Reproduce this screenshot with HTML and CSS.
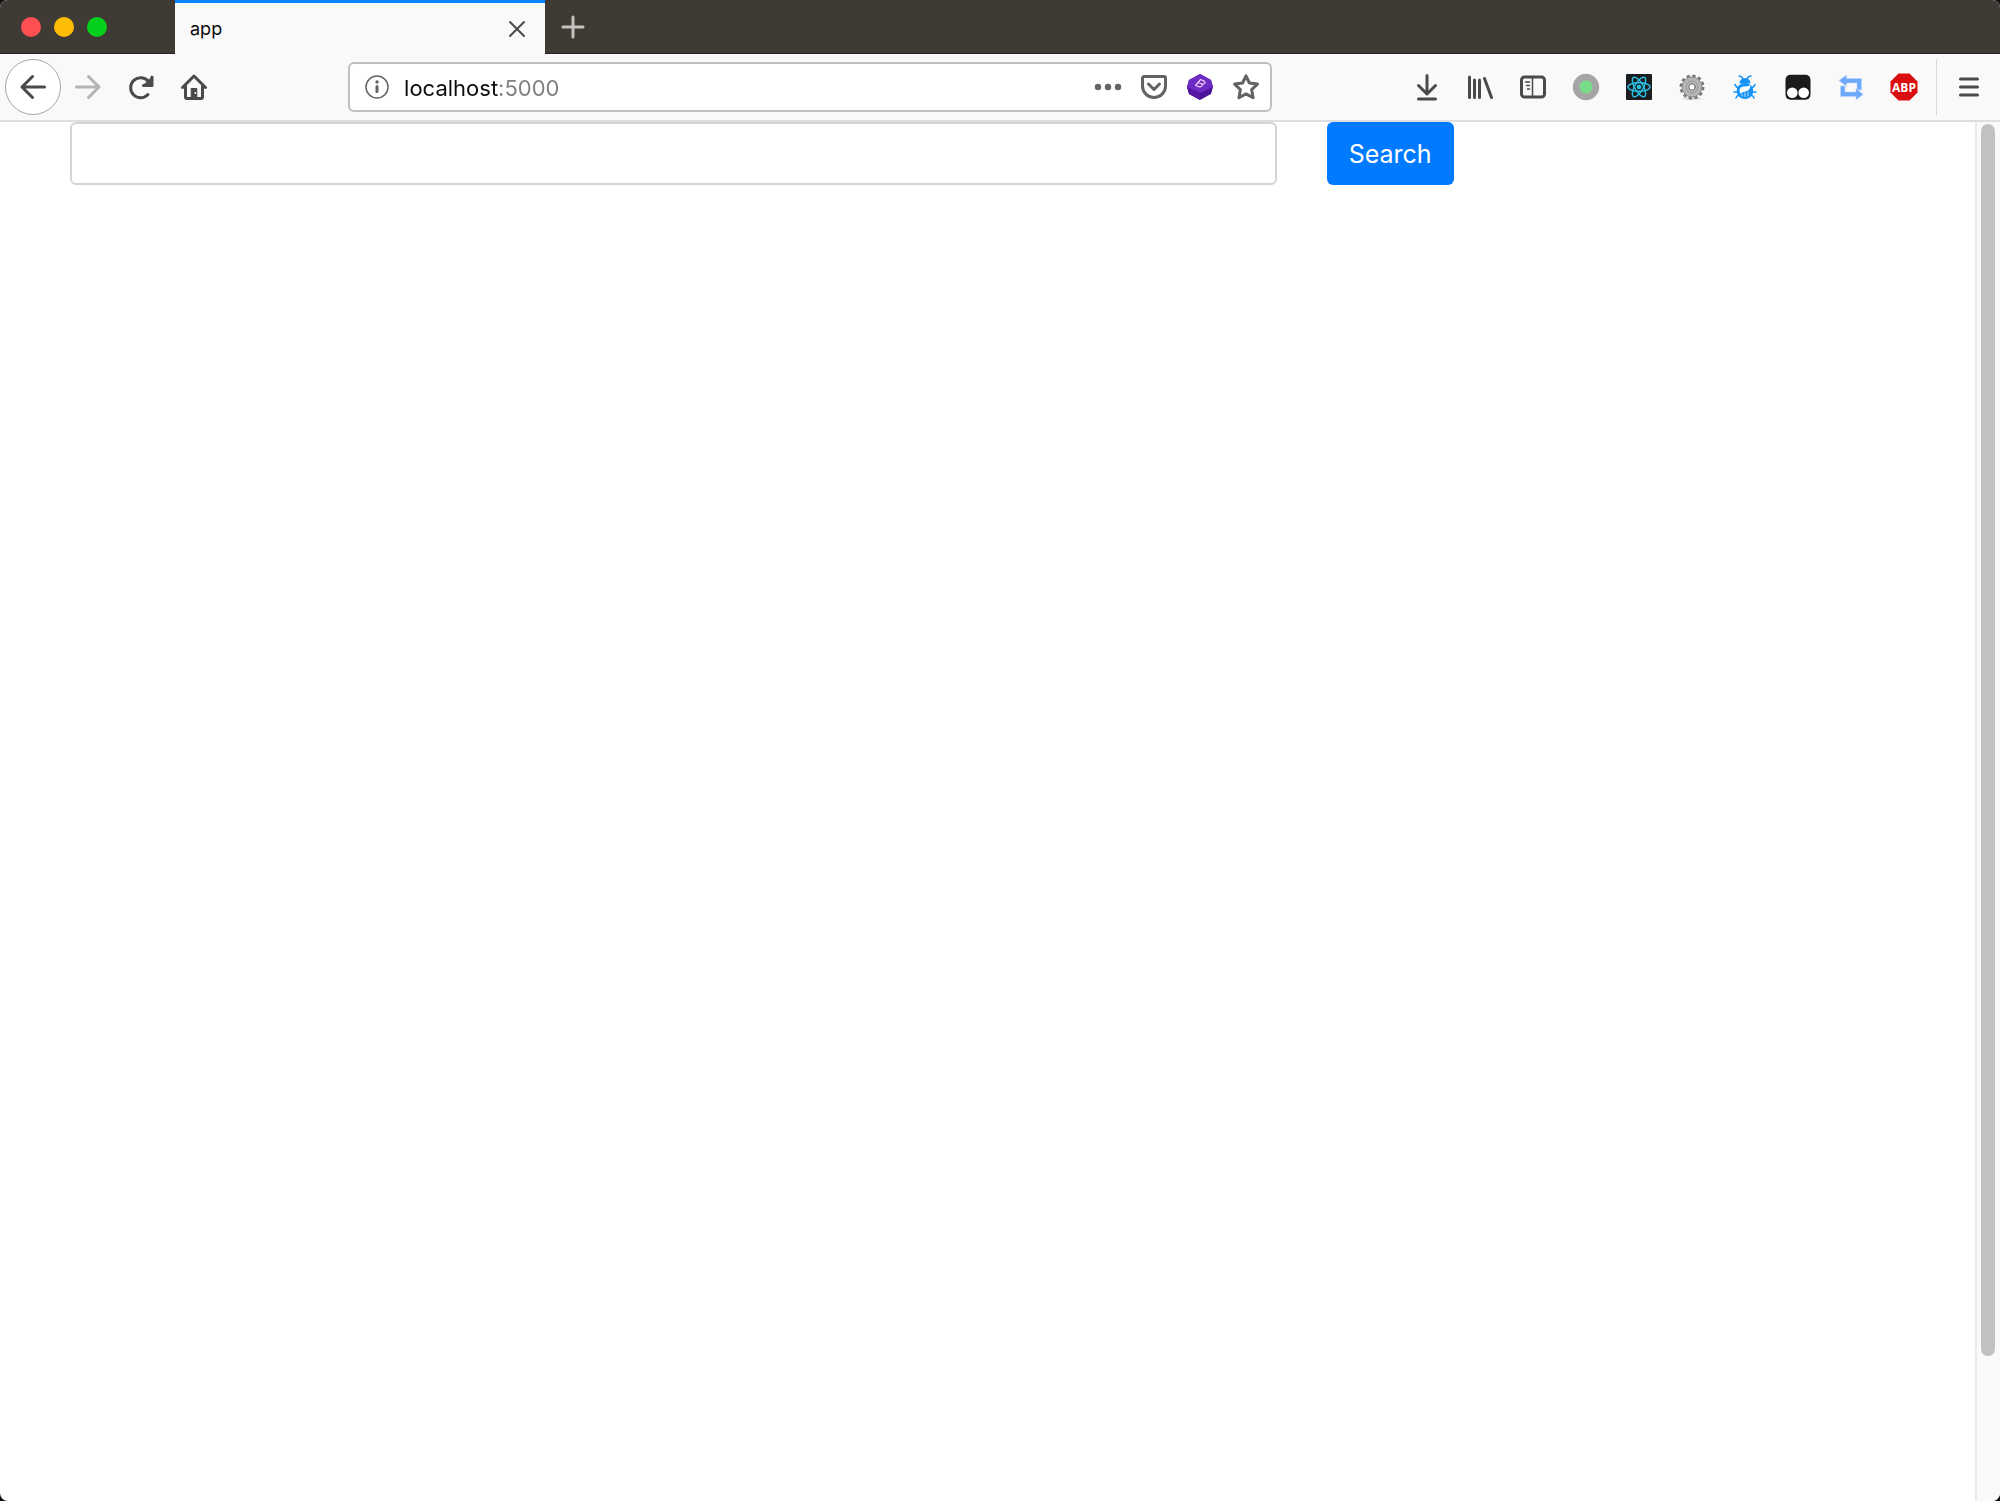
FILE: index.html
```html
<!DOCTYPE html>
<html lang="en">
<head>
  <meta charset="UTF-8">
  <meta name="viewport" content="width=device-width, initial-scale=1.0">
  <title>app</title>
  <link rel="stylesheet" href="styles.css">
</head>
<body>
  <div class="window">

    <header class="titlebar">
      <div class="lights">
        <button type="button" class="light red" aria-label="Close window"></button>
        <button type="button" class="light yellow" aria-label="Minimize window"></button>
        <button type="button" class="light green" aria-label="Zoom window"></button>
      </div>
      <div class="tab">
        <span>app</span>
        <button type="button" class="tab-close" aria-label="Close tab">
          <svg width="18" height="18" viewBox="0 0 18 18"><path d="M2 2l14 14M16 2L2 16"/></svg>
        </button>
      </div>
      <button type="button" class="new-tab" aria-label="New tab">
        <svg width="24" height="24" viewBox="0 0 24 24"><path d="M12 2v20M2 12h20"/></svg>
      </button>
    </header>

    <nav class="toolbar">
      <div class="nav-buttons">
        <button type="button" class="tool back" aria-label="Back">
          <svg class="icon" viewBox="0 0 26 26"><path d="M24.5 13H2M12.5 2.5L2 13l10.5 10.5"/></svg>
        </button>
        <button type="button" class="tool forward" aria-label="Forward" disabled>
          <svg class="icon" viewBox="0 0 26 26"><path d="M1.5 13H24M13.5 2.5L24 13 13.5 23.5"/></svg>
        </button>
        <button type="button" class="tool" aria-label="Reload">
          <svg class="icon" viewBox="0 0 26 26"><path d="M20 20.5A10 10 0 1 1 20.5 7.5"/><path d="M24 3v8.5h-8.5z" class="solid"/><path d="M24 3v8.5h-8.5"/></svg>
        </button>
        <button type="button" class="tool" aria-label="Home">
          <svg class="icon" viewBox="0 0 26 26"><path d="M1.5 13.5L13 2l11.5 11.5M4.5 12v11a1.5 1.5 0 0 0 1.5 1.5h14a1.5 1.5 0 0 0 1.5-1.5V12"/><path d="M10.2 24v-9.5h5.6V24z" class="solid"/><circle cx="14.3" cy="19" r="1" fill="#f9f9fa" stroke="none"/></svg>
        </button>
      </div>

      <div class="spacer"></div>

      <div class="urlbar">
        <button type="button" class="url-button" aria-label="Site information">
          <svg class="icon" viewBox="0 0 26 26"><circle cx="13" cy="13" r="11" stroke-width="1.5"/><path d="M13 12.5v5"/><circle cx="13" cy="8" r="1.7" class="dot"/></svg>
        </button>
        <input type="text" class="url" aria-label="Address" value="localhost:5000">
        <button type="button" class="url-button" aria-label="Page actions">
          <svg class="icon" viewBox="0 0 26 26"><circle cx="3" cy="13" r="3.2" class="dot"/><circle cx="13" cy="13" r="3.2" class="dot"/><circle cx="23" cy="13" r="3.2" class="dot"/></svg>
        </button>
        <button type="button" class="url-button" aria-label="Save to Pocket">
          <svg class="icon" viewBox="0 0 26 26"><path d="M3 2.5h20a1.5 1.5 0 0 1 1.5 1.5v8a11.5 11.5 0 0 1-23 0V4A1.5 1.5 0 0 1 3 2.5zM7.5 10l5.5 5.5 5.5-5.5"/></svg>
        </button>
        <button type="button" class="url-button" aria-label="Bootstrap">
          <svg class="icon" viewBox="0 0 26 26">
            <g stroke="none">
              <path d="M13 0l11 6 2 7-2 7-11 6-11-6-2-7 2-7z" fill="#4a1199"/>
              <path d="M13 0l11 6 2 7-13 6L0 13l2-7z" fill="#6b2bc4"/>
              <path d="M0 13l13 6v7L2 20z" fill="#56169f"/>
            </g>
            <path d="M8.5 11.5L13.5 5.5l3.6 1.6q1.6 1 .3 2.4-1.2 1.100-3 .2 1.600 1 .4 2.300-1.500 1.200-3 .6zM11 8.500l3.400 1.200" stroke="#f5c9f3" stroke-width="1.200"/>
          </svg>
        </button>
        <button type="button" class="url-button" aria-label="Bookmark this page">
          <svg class="icon" viewBox="0 0 26 26"><path d="M13 1.800l3.400 7.200 8 1.100-5.800 5.500 1.500 8.200-7.100-3.900-7.100 3.900 1.500-8.200L1.600 10.100l8-1.100z"/></svg>
        </button>
      </div>

      <div class="spacer"></div>

      <div class="extensions">
        <button type="button" class="tool" aria-label="Downloads">
          <svg class="icon" viewBox="0 0 26 26"><path d="M13 1.5V19M4.5 11.5L13 20l8.500-8.500M4.500 25h17"/></svg>
        </button>
        <button type="button" class="tool" aria-label="Library">
          <svg class="icon" viewBox="0 0 26 26"><path d="M2.500 3v20.500M7.500 6v17.500M12.500 6v17.500M17.500 4.500l7 19"/></svg>
        </button>
        <button type="button" class="tool" aria-label="Sidebars">
          <svg class="icon" viewBox="0 0 26 26"><rect x="1.5" y="3" width="23" height="20" rx="3"/><path d="M12.5 3v20" stroke-width="1.5"/><path d="M5.5 8h4M6.5 11.5h3M7.5 15h2" stroke-width="1.5"/></svg>
        </button>
        <button type="button" class="tool" aria-label="Status">
          <svg class="icon" viewBox="0 0 26 26"><circle cx="13" cy="13" r="13.2" fill="#a5a5a5" stroke="none"/><circle cx="13" cy="13" r="6.5" fill="#79dc89" stroke="none"/></svg>
        </button>
        <button type="button" class="tool" aria-label="React Developer Tools">
          <svg class="icon" viewBox="0 0 26 26">
            <rect width="26" height="26" rx="1" fill="#1b1d20" stroke="none"/>
            <g stroke="#2cc3e8" stroke-width="1.4">
              <ellipse cx="13" cy="13" rx="11" ry="4.3"/>
              <ellipse cx="13" cy="13" rx="11" ry="4.3" transform="rotate(60 13 13)"/>
              <ellipse cx="13" cy="13" rx="11" ry="4.3" transform="rotate(120 13 13)"/>
            </g>
            <circle cx="13" cy="13" r="2.3" fill="#2cc3e8" stroke="none"/>
          </svg>
        </button>
        <button type="button" class="tool" aria-label="Settings">
          <svg class="icon" viewBox="0 0 26 26">
            <ellipse cx="13" cy="24.5" rx="10" ry="1.5" fill="#dcdcdc" stroke="none"/>
            <circle cx="13" cy="13" r="11" stroke="#777" stroke-width="3" stroke-dasharray="3.2 2.559" stroke-linecap="butt"/>
            <circle cx="13" cy="13" r="6.7" stroke="#b5b5b5" stroke-width="7"/>
            <circle cx="13" cy="13" r="10" stroke="#8a8a8a" stroke-width="1"/>
            <circle cx="13" cy="13" r="6" stroke="#9a9a9a" stroke-width="1"/>
            <circle cx="13" cy="13" r="3.2" fill="#fff" stroke="#666" stroke-width="1"/>
          </svg>
        </button>
        <button type="button" class="tool" aria-label="Firebug">
          <svg class="icon" viewBox="0 0 26 26">
            <path d="M7 2q4 .5 4 4M19 2q-4 .5-4 4M3 10.500q1 3 4 3.500M23 10.500q-1 3-4 3.500M2 18h4M24 18h-4M4 24q.5-2 3-3M22 24q-.5-2-3-3" stroke="#1593f5" stroke-width="1.500"/>
            <path d="M7.500 9.500a5.500 5.500 0 0 1 11 0z" fill="#1593f5" stroke="none"/>
            <ellipse cx="13" cy="17" rx="8.300" ry="8" fill="#1593f5" stroke="none"/>
            <path d="M7.500 17q0-4.500 4.500-4.500 4 0 6.500-1.500-.3 5.500-5 6.500-3 .5-5.500 2z" fill="#fff" stroke="none"/>
            <path d="M10 22v-2M13 22.500v-3.500M16 22v-4" stroke="#b5ddff" stroke-width="1"/>
          </svg>
        </button>
        <button type="button" class="tool" aria-label="Tampermonkey">
          <svg class="icon" viewBox="0 0 26 26"><rect x=".5" y=".8" width="25" height="25" rx="5" fill="#1b1b1b" stroke="none"/><circle cx="7.3" cy="18.8" r="5.3" fill="#fff" stroke="none"/><circle cx="18.7" cy="18.8" r="5.3" fill="#fff" stroke="none"/></svg>
        </button>
        <button type="button" class="tool" aria-label="Redirector">
          <svg class="icon" viewBox="0 0 26 26">
            <g fill="#6da9fa" stroke="#b9d5fc" stroke-width=".6">
              <path d="M1 6.5L8.5 1v3.5h15V16H19V9H8.500v3z"/>
              <path d="M25 20.5L18 26v-3.500H2.500V12H7v6h11v-3.500z"/>
            </g>
          </svg>
        </button>
        <button type="button" class="tool" aria-label="Adblock Plus">
          <svg class="icon" viewBox="0 0 26 26"><path d="M7.5-.5h11l8 8v11l-8 8h-11l-8-8v-11z" fill="#d90d0d" stroke="none"/><text x="13" y="17.5" class="abp">ABP</text></svg>
        </button>
      </div>

      <button type="button" class="menu" aria-label="Open menu">
        <svg class="icon" viewBox="0 0 26 26"><path d="M4.5 5h17M4.5 13h17M4.5 21h17"/></svg>
      </button>
    </nav>

    <div class="viewport">
      <main class="page">
        <form class="row">
          <div class="col">
            <input type="text" class="form-control" aria-label="Search text">
          </div>
          <div class="col">
            <button type="submit" class="btn">Search</button>
          </div>
        </form>
      </main>
      <div class="scrollbar">
        <div class="thumb"></div>
      </div>
    </div>

  </div>
</body>
</html>
```
FILE: styles.css
```css
* {
  box-sizing: border-box;
}

body {
  margin: 0;
  background: #111;
  font-family: Inter, "Liberation Sans", sans-serif;
}

button,
input {
  margin: 0;
  padding: 0;
  border: 0;
  background: none;
  font-family: inherit;
}

button {
  display: flex;
  align-items: center;
  justify-content: center;
}

svg {
  display: block;
  fill: none;
  stroke: currentColor;
  stroke-width: 3;
  stroke-linecap: round;
  stroke-linejoin: round;
  overflow: visible;
}

.icon {
  width: 26px;
  height: 26px;
}

.solid {
  fill: currentColor;
  stroke-width: 1;
}

.dot {
  fill: currentColor;
  stroke: none;
}

.window {
  display: flex;
  flex-direction: column;
  min-height: 100vh;
  border-radius: 8px;
  overflow: hidden;
  background: #fff;
}

/* title bar */

.titlebar {
  display: flex;
  height: 54px;
  background: #403a34;
  box-shadow: inset 0 -1px #24201c;
}

.lights {
  display: flex;
  align-items: center;
  gap: 13px;
  width: 175px;
  padding-left: 21px;
}

.light {
  width: 20px;
  height: 20px;
  border-radius: 50%;
}

.red {
  background: #ff4f52;
}

.yellow {
  background: #ffbd05;
}

.green {
  background: #05d01b;
}

.tab {
  display: flex;
  align-items: center;
  justify-content: space-between;
  width: 370px;
  padding: 0 19px 0 15px;
  border-top: 3px solid #0a84ff;
  background: #f9f9fa;
  color: #0c0c0d;
  font-size: 18px;
}

.tab-close {
  color: #4a4a4a;
}

.tab-close svg {
  stroke-width: 2;
}

.new-tab {
  width: 56px;
  color: #c4c2bf;
}

/* toolbar */

.toolbar {
  display: flex;
  align-items: center;
  height: 68px;
  padding-left: 5px;
  border-bottom: 2px solid #dedede;
  background: #f9f9fa;
  color: #4a4a4b;
}

.nav-buttons,
.extensions {
  display: flex;
}

.tool {
  width: 53px;
  height: 56px;
  color: inherit;
}

.nav-buttons .back {
  width: 56px;
  border: 1px solid #a5a5a5;
  border-radius: 50%;
  background: #fff;
}

.nav-buttons .forward {
  color: #b3b3b3;
}

.spacer {
  flex: 7;
}

.urlbar {
  display: flex;
  flex: 50;
  align-items: center;
  height: 50px;
  padding: 0 1px 0 4px;
  border: 2px solid #bfbfbf;
  border-radius: 6px;
  background: #fff;
}

.url-button {
  width: 46px;
  height: 46px;
  color: #636363;
}

/* host name dark, port grey */
.url {
  flex: 1;
  min-width: 0;
  padding: 2px 0 0 4px;
  background: linear-gradient(to right, #0c0c0d 98px, #7d7d7d 98px);
  -webkit-background-clip: text;
  background-clip: text;
  -webkit-text-fill-color: transparent;
  color: #0c0c0d;
  font-size: 22px;
  outline: 0;
}

.abp {
  fill: #fff;
  stroke: none;
  font-family: "Open Sans", sans-serif;
  font-size: 12px;
  font-weight: 700;
  text-anchor: middle;
}

.menu {
  width: 64px;
  height: 56px;
  margin-left: 6px;
  border-left: 1px solid #d9d9d9;
  color: inherit;
}

/* page */

.viewport {
  display: flex;
  flex: 1;
}

.page {
  flex: 1;
  padding: 0 45px;
}

.row {
  display: grid;
  grid-template-columns: 8fr 4fr;
}

.col {
  padding: 0 25px;
}

.form-control {
  display: block;
  width: 100%;
  height: 63px;
  padding: 0 20px;
  border: 2px solid #d2d5d8;
  border-radius: 6px;
  background: #fff;
  color: #495057;
  font-size: 25px;
}

.btn {
  height: 63px;
  padding: 0 22px;
  border-radius: 6px;
  background: #007bff;
  color: #fff;
  font-size: 25px;
}

.scrollbar {
  width: 25px;
  padding: 2px 5px 2px 4px;
  border-left: 2px solid #ebebeb;
  background: #fafafa;
}

.thumb {
  height: 1232px;
  border-radius: 7px;
  background: #c1c1c1;
}
```
